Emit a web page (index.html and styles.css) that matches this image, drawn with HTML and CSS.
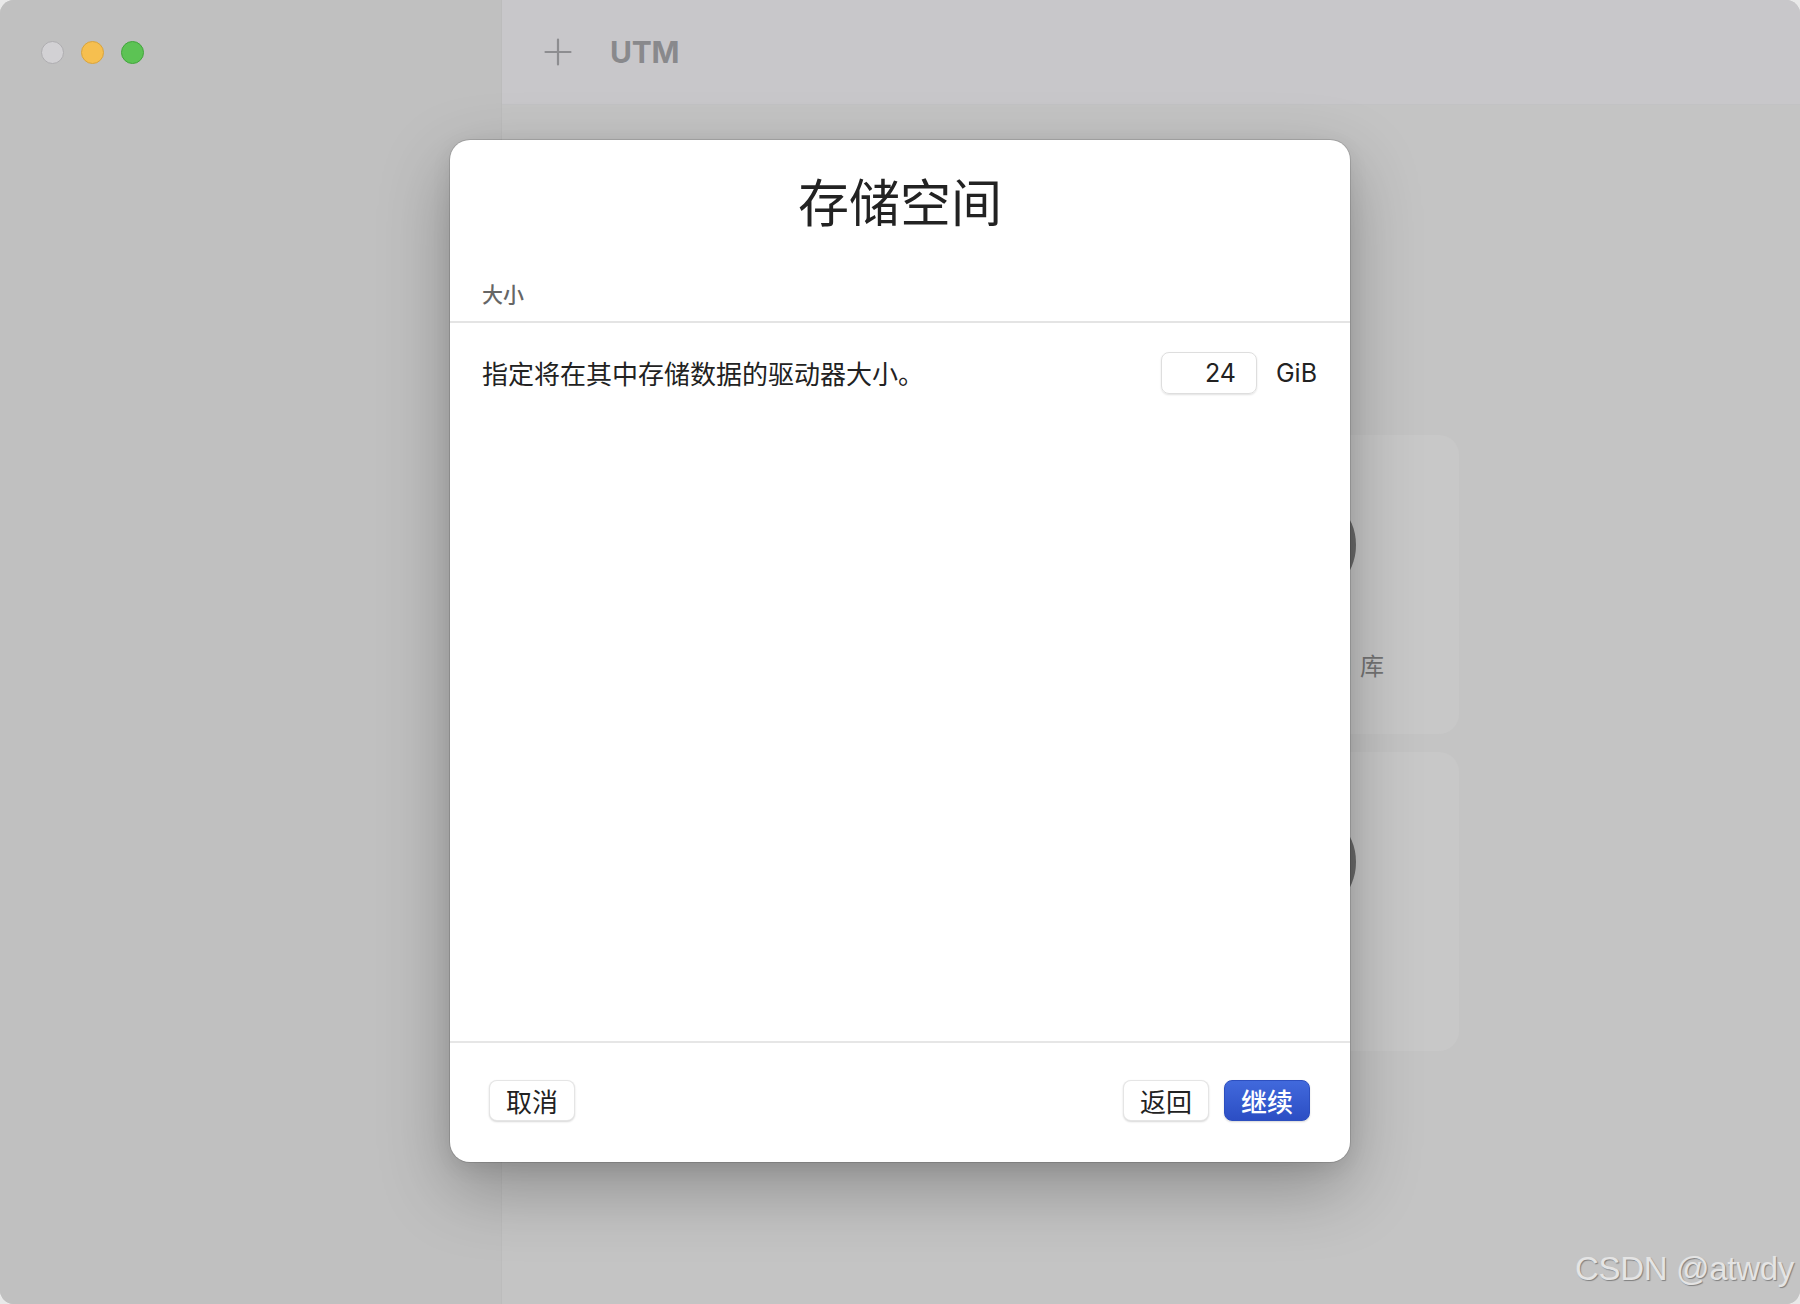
FILE: index.html
```html
<!DOCTYPE html>
<html lang="zh-CN">
<head>
<meta charset="utf-8">
<title>UTM - 存储空间</title>
<link rel="stylesheet" href="styles.css">
</head>
<body>
<div class="window">
  <aside class="sidebar">
    <div class="lights">
      <span class="light light-close"></span>
      <span class="light light-min"></span>
      <span class="light light-max"></span>
    </div>
  </aside>
  <main class="main">
    <header class="toolbar">
      <svg class="plus" width="28" height="28" viewBox="0 0 28 28" aria-hidden="true">
        <path d="M14 1.5V26.5M1.5 14H26.5" stroke="#8d8d90" stroke-width="2.2" stroke-linecap="round" fill="none"/>
      </svg>
      <span class="app-title">UTM</span>
    </header>
    <section class="welcome">
      <div class="grid">
        <div class="card"><span class="card-icon"></span><span class="card-text">创建新虚拟机</span></div>
        <div class="card"><span class="card-icon"></span><span class="card-text">浏览<span class="latin">UTM</span>库</span></div>
        <div class="card"><span class="card-icon"></span><span class="card-text">用户指南</span></div>
        <div class="card"><span class="card-icon"></span><span class="card-text">支持</span></div>
      </div>
    </section>
  </main>

  <div class="dialog">
    <h1 class="dialog-title">存储空间</h1>
    <div class="section-label">大小</div>
    <div class="size-row">
      <span class="size-desc">指定将在其中存储数据的驱动器大小。</span>
      <span class="size-input">24</span>
      <span class="size-unit">GiB</span>
    </div>
    <div class="dialog-spacer"></div>
    <footer class="dialog-footer">
      <button class="btn">取消</button>
      <button class="btn btn-back">返回</button>
      <button class="btn btn-primary">继续</button>
    </footer>
  </div>

  <div class="watermark">CSDN @atwdy</div>
</div>
</body>
</html>
```
FILE: styles.css
```css
* { box-sizing: border-box; }

html, body {
  margin: 0;
  padding: 0;
  background: #e9e9e9;
}

body {
  width: 1800px;
  height: 1304px;
  overflow: hidden;
  font-family: "Noto Sans CJK SC", "Noto Sans", sans-serif;
}

.window {
  position: relative;
  width: 1800px;
  height: 1304px;
  display: flex;
  border-radius: 14px;
  overflow: hidden;
  background: #c4c4c4;
}

/* Sidebar */
.sidebar {
  width: 502px;
  flex: none;
  background: #c0c0c0;
  border-right: 1px solid #bcbcbc;
  padding: 41px 0 0 41px;
}

.lights {
  display: flex;
  gap: 17px;
}

.light {
  width: 23px;
  height: 23px;
  border-radius: 50%;
  display: block;
}

.light-close { background: #d2d1d4; border: 1px solid #aeadb0; }
.light-min { background: #f6bf4f; border: 1px solid #d9a43c; }
.light-max { background: #5cc354; border: 1px solid #42a53c; }

/* Main */
.main {
  flex: 1;
  display: flex;
  flex-direction: column;
  min-width: 0;
}

.toolbar {
  height: 105px;
  flex: none;
  display: flex;
  align-items: center;
  gap: 38px;
  padding-left: 42px;
  background: #c8c7ca;
  border-bottom: 1px solid #c2c2c4;
}

.plus { display: block; }

.app-title {
  font-family: "Inter", "Liberation Sans", sans-serif;
  font-weight: 700;
  font-size: 30px;
  color: #89898c;
  letter-spacing: -0.2px;
}

.welcome {
  flex: 1;
  background: #c4c4c4;
  padding-top: 330px;
  padding-right: 341px;
}

.grid {
  display: grid;
  grid-template-columns: repeat(2, 300px);
  grid-auto-rows: 299px;
  gap: 18px 16px;
  justify-content: end;
}

.card {
  background: #c8c8c8;
  border-radius: 20px;
  display: flex;
  flex-direction: column;
  align-items: center;
  padding-top: 54px;
}

.card-icon {
  width: 112px;
  height: 112px;
  border-radius: 50%;
  background: #6b6b6b;
  display: block;
  margin-right: 18px;
}

.card-text {
  margin-top: 48px;
  margin-left: 11px;
  font-size: 24px;
  line-height: 32px;
  color: #747474;
}

.latin { margin: 0 8px; }

/* Dialog */
.dialog {
  position: absolute;
  left: 450px;
  top: 140px;
  width: 900px;
  height: 1022px;
  background: #ffffff;
  border-radius: 20px;
  display: flex;
  flex-direction: column;
  box-shadow: 0 0 0 1px rgba(0, 0, 0, 0.12), 0 26px 70px rgba(0, 0, 0, 0.28), 0 6px 20px rgba(0, 0, 0, 0.08);
}

.dialog-title {
  margin: 30px 0 0;
  text-align: center;
  font-size: 51px;
  line-height: 60px;
  font-weight: 400;
  color: #222222;
}

.section-label {
  margin-top: 50px;
  padding: 0 32px 15px;
  font-size: 21px;
  line-height: 26px;
  font-weight: 500;
  color: #666666;
  border-bottom: 2px solid #e4e4e4;
}

.size-row {
  display: flex;
  align-items: center;
  padding: 29px 33px 0 32px;
}

.size-desc {
  flex: 1;
  font-size: 26px;
  line-height: 42px;
  color: #222222;
}

.size-input {
  width: 96px;
  height: 42px;
  border: 1px solid #dedede;
  border-radius: 8px;
  box-shadow: 0 1px 2px rgba(0, 0, 0, 0.12);
  text-align: right;
  padding-right: 20px;
  font-family: "Inter", "Liberation Sans", sans-serif;
  font-size: 25px;
  line-height: 40px;
  color: #222222;
}

.size-unit {
  margin-left: 19px;
  font-family: "Inter", "Liberation Sans", sans-serif;
  font-size: 25px;
  line-height: 42px;
  color: #222222;
}

.dialog-spacer { flex: 1; }

.dialog-footer {
  height: 121px;
  flex: none;
  border-top: 2px solid #e6e6e6;
  display: flex;
  align-items: center;
  padding: 0 40px 4px 39px;
}

.btn {
  height: 41px;
  padding: 0 16px;
  border: 1px solid rgba(0, 0, 0, 0.1);
  border-radius: 8px;
  background: #ffffff;
  box-shadow: 0 1px 2px rgba(0, 0, 0, 0.16);
  font-family: "Noto Sans CJK SC", sans-serif;
  font-size: 26px;
  line-height: 39px;
  color: #222222;
}

.btn-back { margin-left: auto; margin-right: 15px; }

.btn-primary {
  background: linear-gradient(#4169dc, #2c4ec4);
  border-color: #2d4fbf;
  color: #ffffff;
  font-weight: 500;
}

/* Watermark */
.watermark {
  position: absolute;
  right: 6px;
  bottom: 16px;
  font-family: "Liberation Sans", sans-serif;
  font-size: 33px;
  color: #e4e4e4;
  text-shadow: 1px 1px 1px rgba(0, 0, 0, 0.35);
  letter-spacing: -0.3px;
}
```
